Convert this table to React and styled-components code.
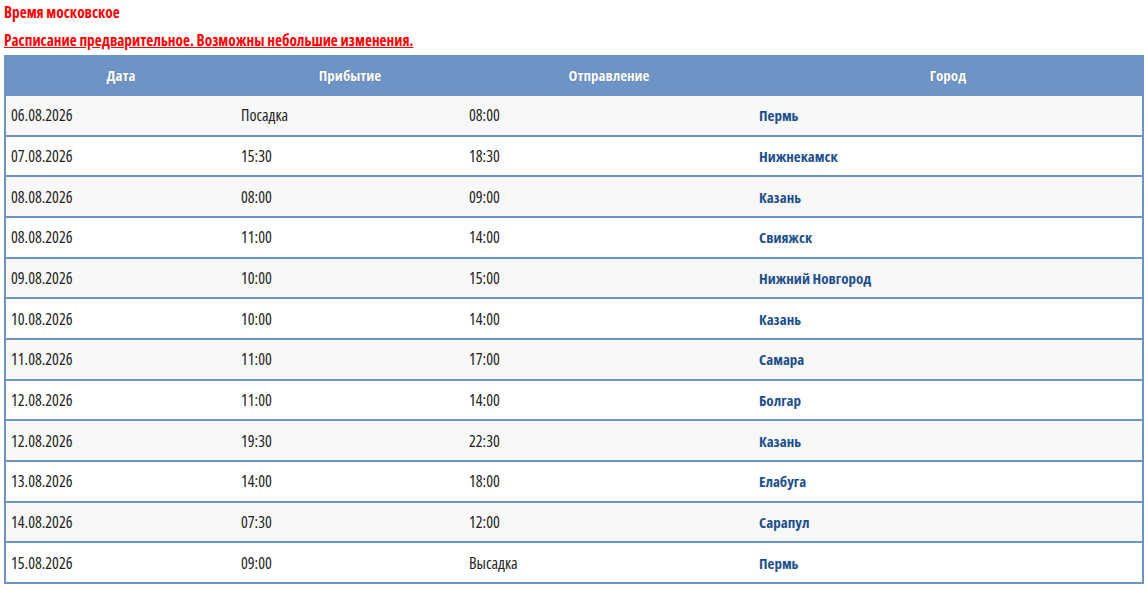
import React from 'react'
import styled, { createGlobalStyle } from 'styled-components'

const schedule = [
  ['06.08.2026', 'Посадка', '08:00', 'Пермь'],
  ['07.08.2026', '15:30', '18:30', 'Нижнекамск'],
  ['08.08.2026', '08:00', '09:00', 'Казань'],
  ['08.08.2026', '11:00', '14:00', 'Свияжск'],
  ['09.08.2026', '10:00', '15:00', 'Нижний Новгород'],
  ['10.08.2026', '10:00', '14:00', 'Казань'],
  ['11.08.2026', '11:00', '17:00', 'Самара'],
  ['12.08.2026', '11:00', '14:00', 'Болгар'],
  ['12.08.2026', '19:30', '22:30', 'Казань'],
  ['13.08.2026', '14:00', '18:00', 'Елабуга'],
  ['14.08.2026', '07:30', '12:00', 'Сарапул'],
  ['15.08.2026', '09:00', 'Высадка', 'Пермь'],
]

const GlobalStyle = createGlobalStyle`
  body {
    margin: 0;
    background: #fff;
    font-family: "Open Sans", "DejaVu Sans Condensed", sans-serif;
    font-stretch: condensed;
  }
`

const Page = styled.div`
  padding: 2px 3px 0 4px;
`

const Note = styled.p`
  margin: 0 0 ${(p) => p.$gap}px;
  color: #ff0000;
  font-weight: bold;
  font-size: 15.3px;
  line-height: 20px;
  text-decoration: ${(p) => (p.$underline ? 'underline' : 'none')};
`

const Table = styled.table`
  width: 1140px;
  border-collapse: collapse;
  border: 2px solid #6d94c4;
  font-size: 16px;
  line-height: 20px;
`

const HeadCell = styled.th`
  background: #6d94c4;
  color: #fff;
  font-weight: bold;
  font-size: 15px;
  height: 35px;
  padding: 0 0 2px;
  text-align: center;
  text-shadow: 0 0 1px rgba(0, 0, 0, 0.3);
  width: ${(p) => p.$w}px;
`

const Row = styled.tr`
  background: ${(p) => (p.$odd ? '#f8f8f8' : '#fff')};
  border-top: 2px solid #6d94c4;
`

const Cell = styled.td`
  height: 38.67px;
  padding: 0 0 0 5px;
  color: ${(p) => (p.$city ? '#1d4f8c' : '#222')};
  font-weight: ${(p) => (p.$city ? 'bold' : 'normal')};
  font-size: ${(p) => (p.$city ? 15 : 16)}px;
`

function App() {
  return (
    <Page>
      <GlobalStyle />
      <Note $gap={8}>Время московское</Note>
      <Note $gap={5} $underline>Расписание предварительное. Возможны небольшие изменения.</Note>
      <Table>
        <thead>
          <tr>
            <HeadCell $w={230}>Дата</HeadCell>
            <HeadCell $w={228}>Прибытие</HeadCell>
            <HeadCell $w={290}>Отправление</HeadCell>
            <HeadCell>Город</HeadCell>
          </tr>
        </thead>
        <tbody>
          {schedule.map((r, i) => (
            <Row key={i} $odd={i % 2 === 0}>
              <Cell>{r[0]}</Cell>
              <Cell>{r[1]}</Cell>
              <Cell>{r[2]}</Cell>
              <Cell $city>{r[3]}</Cell>
            </Row>
          ))}
        </tbody>
      </Table>
    </Page>
  )
}

export default App
